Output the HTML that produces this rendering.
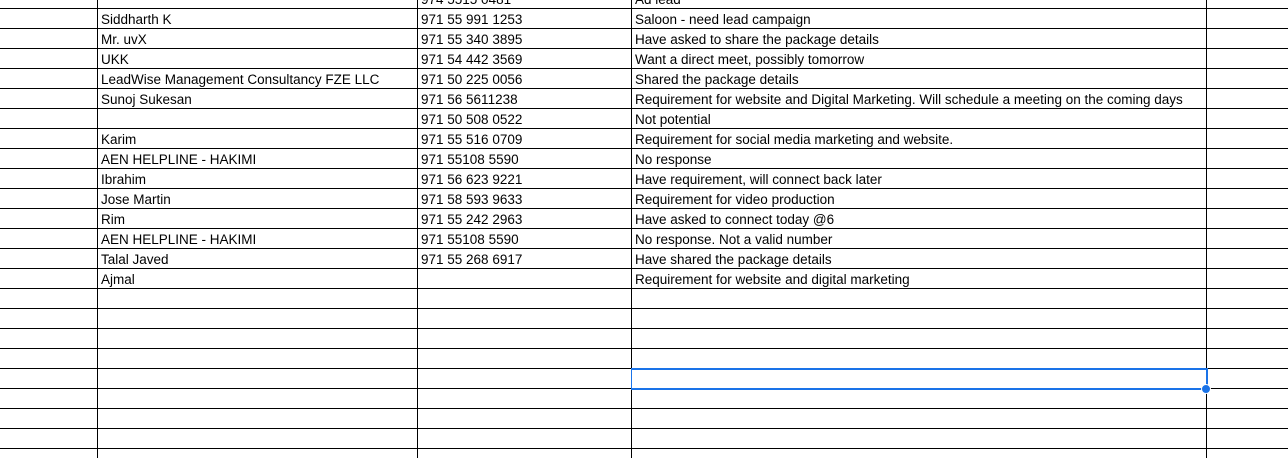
<!DOCTYPE html><html><head><style>
body{margin:0;width:1288px;height:458px;overflow:hidden;background:#fff;position:relative;font-family:"Liberation Sans",Carlito,sans-serif;font-size:13.5px;color:#000}
.h{position:absolute;left:0;width:1288px;height:1px;background:#000}
.v{position:absolute;top:0;height:458px;width:1px;background:#000}
.t{position:absolute;white-space:nowrap;line-height:20px}
</style></head><body>
<div id="g"></div>
<script>
var g=document.getElementById('g'),h='';
for(var y=8;y<458;y+=20)h+='<div class="h" style="top:'+y+'px"></div>';
[97,417,631,1206].forEach(function(x){h+='<div class="v" style="left:'+x+'px"></div>'});
var rows=[["","974 5515 0481","Ad lead"],["Siddharth K","971 55 991 1253","Saloon - need lead campaign"],["Mr. uvX","971 55 340 3895","Have asked to share the package details"],["UKK","971 54 442 3569","Want a direct meet, possibly tomorrow"],["LeadWise Management Consultancy FZE LLC","971 50 225 0056","Shared the package details"],["Sunoj Sukesan","971 56 5611238","Requirement for website and Digital Marketing. Will schedule a meeting on the coming days"],["","971 50 508 0522","Not potential"],["Karim","971 55 516 0709","Requirement for social media marketing and website."],["AEN HELPLINE - HAKIMI","971 55108 5590","No response"],["Ibrahim","971 56 623 9221","Have requirement, will connect back later"],["Jose Martin","971 58 593 9633","Requirement for video production"],["Rim","971 55 242 2963","Have asked to connect today @6"],["AEN HELPLINE - HAKIMI","971 55108 5590","No response. Not a valid number"],["Talal Javed","971 55 268 6917","Have shared the package details"],["Ajmal","","Requirement for website and digital marketing"]];
rows.forEach(function(r,i){var top=-10+i*20;
h+='<div class="t" style="top:'+top+'px;left:101px">'+r[0]+'</div><div class="t" style="top:'+top+'px;left:421px">'+r[1]+'</div><div class="t" style="top:'+top+'px;left:635px">'+r[2]+'</div>';});
h+='<div style="position:absolute;left:631px;top:368px;width:574px;height:18px;border:2px solid #1a73e8;border-left-width:1px"></div>';
h+='<div style="position:absolute;left:1202px;top:385px;width:8px;height:8px;border-radius:50%;background:#1a73e8;border:1px solid #fff;margin:-1px"></div>';
g.innerHTML=h;
</script>
</body></html>
